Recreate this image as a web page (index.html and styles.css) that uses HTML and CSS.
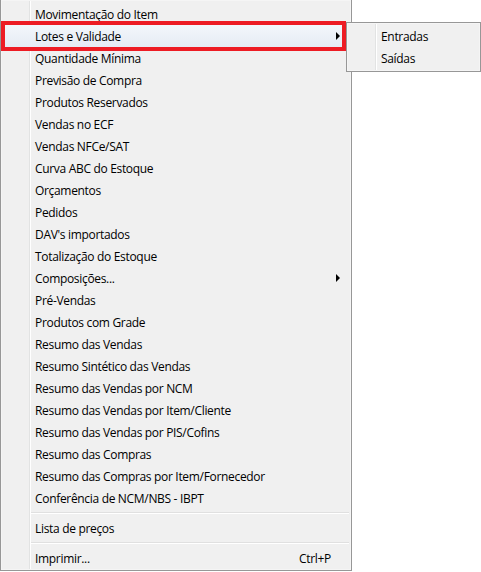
FILE: index.html
```html
<!DOCTYPE html>
<html lang="pt-BR">
<head>
<meta charset="utf-8">
<title>Menu</title>
<link rel="stylesheet" href="styles.css">
</head>
<body>
<div class="screen">
  <div class="menu main-menu">
    <ul class="items">
      <li class="item"><span class="label">Movimentação do Item</span></li>
      <li class="item hot"><span class="label">Lotes e Validade</span><span class="arrow"></span></li>
      <li class="item"><span class="label">Quantidade Mínima</span></li>
      <li class="item"><span class="label">Previsão de Compra</span></li>
      <li class="item"><span class="label">Produtos Reservados</span></li>
      <li class="item"><span class="label">Vendas no ECF</span></li>
      <li class="item"><span class="label">Vendas NFCe/SAT</span></li>
      <li class="item"><span class="label">Curva ABC do Estoque</span></li>
      <li class="item"><span class="label">Orçamentos</span></li>
      <li class="item"><span class="label">Pedidos</span></li>
      <li class="item"><span class="label">DAV's importados</span></li>
      <li class="item"><span class="label">Totalização do Estoque</span></li>
      <li class="item"><span class="label">Composições...</span><span class="arrow"></span></li>
      <li class="item"><span class="label">Pré-Vendas</span></li>
      <li class="item"><span class="label">Produtos com Grade</span></li>
      <li class="item"><span class="label">Resumo das Vendas</span></li>
      <li class="item"><span class="label">Resumo Sintético das Vendas</span></li>
      <li class="item"><span class="label">Resumo das Vendas por NCM</span></li>
      <li class="item"><span class="label">Resumo das Vendas por Item/Cliente</span></li>
      <li class="item"><span class="label">Resumo das Vendas por PIS/Cofins</span></li>
      <li class="item"><span class="label">Resumo das Compras</span></li>
      <li class="item"><span class="label">Resumo das Compras por Item/Fornecedor</span></li>
      <li class="item"><span class="label">Conferência de NCM/NBS - IBPT</span></li>
      <li class="sep"></li>
      <li class="item"><span class="label">Lista de preços</span></li>
      <li class="sep"></li>
      <li class="item"><span class="label">Imprimir...</span><span class="shortcut">Ctrl+P</span></li>
    </ul>
  </div>
  <div class="menu sub-menu">
    <ul class="items">
      <li class="item"><span class="label">Entradas</span></li>
      <li class="item"><span class="label">Saídas</span></li>
    </ul>
  </div>
  <div class="annotation"></div>
</div>
</body>
</html>
```

FILE: styles.css
```css
* { box-sizing: border-box; }

html, body {
  margin: 0;
  padding: 0;
  background: #ffffff;
}

.screen {
  position: relative;
  width: 481px;
  height: 572px;
  overflow: hidden;
  font-family: "Open Sans", "Noto Sans", sans-serif;
  font-size: 12px;
  letter-spacing: -0.32px;
  color: #000000;
}

.menu {
  background:
    linear-gradient(to right,
      #f0f0f0 0, #f0f0f0 28px,
      #e2e3e3 28px, #e2e3e3 29px,
      #ffffff 29px, #ffffff 30px,
      #f0f0f0 30px);
  border: 1px solid #979797;
  box-shadow: inset 0 0 0 1px #f5f5f5;
}

.main-menu {
  width: 352px;
  border-top: none;
  padding: 3px 0 1px;
}

.sub-menu {
  position: absolute;
  left: 346px;
  top: 22px;
  width: 135px;
  padding: 2px 0;
}

.items {
  list-style: none;
  margin: 0;
  padding: 0;
}

.item {
  display: flex;
  align-items: center;
  height: 22px;
  line-height: 20px;
  padding: 2px 20px 0 34px;
  white-space: nowrap;
}

.item .label {
  flex: 1;
}

.item.hot {
  background: linear-gradient(#f3f6fb, #e5ebf4);
}

.arrow {
  width: 0;
  height: 0;
  border-left: 4px solid #000;
  border-top: 4px solid transparent;
  border-bottom: 4px solid transparent;
  margin-right: -9px;
  margin-top: -2px;
}

.shortcut {
  margin-left: 20px;
}

.sep {
  height: 8px;
  margin-left: 30px;
  margin-right: 2px;
  display: flex;
  flex-direction: column;
  justify-content: center;
}

.sep::before {
  content: "";
  display: block;
  height: 1px;
  background: #e0e0e0;
  border-bottom: 1px solid #ffffff;
  box-sizing: content-box;
}

.annotation {
  position: absolute;
  left: 1px;
  top: 21px;
  width: 345px;
  height: 30px;
  border: 4px solid #ed1c24;
}
```
